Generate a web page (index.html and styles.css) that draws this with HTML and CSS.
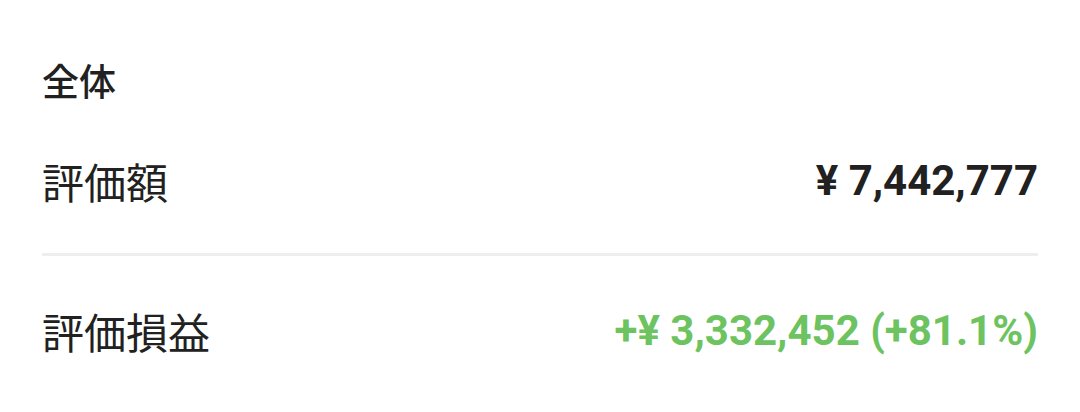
FILE: index.html
```html
<!DOCTYPE html>
<html lang="ja">
<head>
<meta charset="utf-8">
<link rel="stylesheet" href="styles.css">
</head>
<body>
<div class="card">
  <div class="title">全体</div>
  <div class="row row-first">
    <span class="label">評価額</span>
    <span class="value">¥ 7,442,777</span>
  </div>
  <div class="divider"></div>
  <div class="row row-second">
    <span class="label">評価損益</span>
    <span class="value gain">+¥ 3,332,452 (+81.1%)</span>
  </div>
</div>
</body>
</html>
```
FILE: styles.css
```css
html, body {
  margin: 0;
  padding: 0;
  background: #ffffff;
}
body {
  width: 1080px;
  height: 412px;
  overflow: hidden;
  font-family: Roboto, "Noto Sans CJK JP", sans-serif;
  color: #212121;
}
.card {
  padding: 56px 42px 0 42px;
  display: flex;
  flex-direction: column;
}
.title {
  font-family: "Noto Sans CJK JP", sans-serif;
  font-size: 37px;
  font-weight: 500;
  line-height: 48px;
  height: 48px;
}
.row {
  display: flex;
  justify-content: space-between;
  align-items: center;
  height: 74px;
  line-height: 74px;
}
.row-first {
  padding: 40px 0 35px;
}
.row-second {
  padding: 38px 0 0;
}
.label {
  font-family: "Noto Sans CJK JP", sans-serif;
  font-size: 42px;
  font-weight: 400;
}
.value {
  font-family: Roboto, sans-serif;
  font-size: 42px;
  font-weight: 700;
}
.gain {
  color: #6cc35f;
}
.divider {
  height: 3px;
  background: #eeeeee;
}
```
